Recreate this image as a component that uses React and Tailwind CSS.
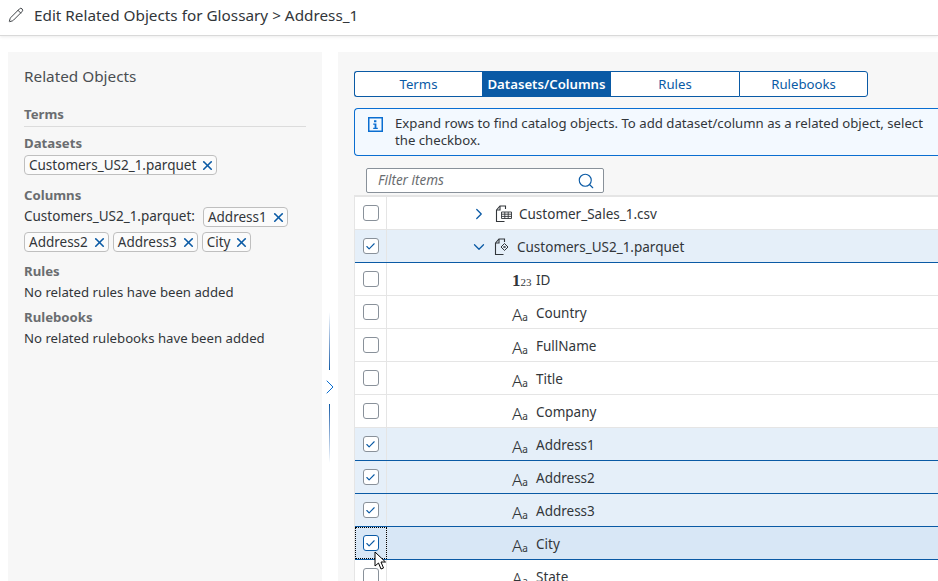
import React from "react";
import { Check, ChevronDown, ChevronRight, Pencil, Search, X } from "lucide-react";

const font = "font-['Noto_Sans','Open_Sans',sans-serif]";

const rows = [
  { name: "Customer_Sales_1.csv", kind: "table", icon: "file" },
  { name: "Customers_US2_1.parquet", kind: "open", icon: "file", checked: true },
  { name: "ID", icon: "num" },
  { name: "Country", icon: "text" },
  { name: "FullName", icon: "text" },
  { name: "Title", icon: "text" },
  { name: "Company", icon: "text" },
  { name: "Address1", icon: "text", checked: true },
  { name: "Address2", icon: "text", checked: true },
  { name: "Address3", icon: "text", checked: true },
  { name: "City", icon: "text", checked: true, focus: true },
  { name: "State", icon: "text" },
];

function Token({ label }) {
  return (
    <span className="inline-flex h-5 items-center rounded-[4px] border border-[#bfbfbf] bg-[#fbfbfb] pl-1 text-[13.5px] text-[#32363a]">
      {label}
      <X size={15} strokeWidth={2.6} className="ml-[4px] mr-[1px] text-[#0a5aa5]" />
    </span>
  );
}

function FileIcon({ kind }) {
  return (
    <svg width="18" height="18" viewBox="0 0 18 18" fill="none" stroke="#32363a" strokeWidth="1.1">
      <path d="M1.5 5 L5 1 H10.5 V4 M1.5 5 V16.5 H9.5" />
      <path d="M5 1 V5 H1.5" />
      {kind === "table" ? (
        <path d="M6.5 7 H16.5 V13.5 H6.5 Z M6.5 9.2 H16.5 M6.5 11.4 H16.5 M9.8 7 V13.5 M13.2 7 V13.5" strokeWidth="0.9" />
      ) : (
        <path d="M10.5 5.5 L14 9 L10.5 12.5 L7 9 Z M10.5 8 L11.5 9 L10.5 10 L9.5 9 Z" strokeWidth="1" />
      )}
    </svg>
  );
}

function InfoBox() {
  return (
    <svg width="15" height="15" viewBox="0 0 15 15" fill="none" className="mt-[2px] shrink-0">
      <rect x="0.75" y="0.75" width="13.5" height="13.5" stroke="#0a6ed1" strokeWidth="1.5" />
      <path d="M6 3.2 H8.4 V5.2 H6 Z M5.2 6.6 H8.4 V10.8 H9.8 V12 H5.2 V10.8 H6.6 V7.8 H5.2 Z" fill="#0a6ed1" />
    </svg>
  );
}

function Row({ row }) {
  const selected = row.checked;
  return (
    <div
      className={`relative flex h-[33px] shrink-0 border-b ${
        selected ? "border-[#0a5aa5]" : "border-[#e5e5e5]"
      } ${row.focus ? "bg-[#d8e7f6]" : selected ? "bg-[#e5eff9]" : "bg-white"}`}
    >
      <div
        className={`flex w-[32px] shrink-0 items-center justify-center border-r border-[#e5e5e5] ${
          row.focus ? "outline outline-1 outline-dotted outline-black -outline-offset-1" : ""
        }`}
      >
        <span
          className={`flex h-4 w-4 items-center justify-center rounded-[3px] border bg-white ${
            row.focus ? "border-[#0a5aa5]" : "border-[#89919a]"
          }`}
        >
          {selected && <Check size={11} strokeWidth={2.4} className="text-[#0a5aa5]" />}
        </span>
      </div>
      {row.kind ? (
        <div className="flex items-center pt-[2px] text-[13.5px] text-[#32363a]">
          {row.kind === "table" ? (
            <>
              <ChevronRight size={18} strokeWidth={1.7} className="ml-[83px] text-[#0a5aa5]" />
              <span className="ml-[7px] flex"><FileIcon kind="table" /></span>
              <span className="ml-[6px]">{row.name}</span>
            </>
          ) : (
            <>
              <ChevronDown size={18} strokeWidth={1.7} className="ml-[83px] text-[#0a5aa5]" />
              <span className="ml-[6px] flex"><FileIcon kind="open" /></span>
              <span className="ml-[5px]">{row.name}</span>
            </>
          )}
        </div>
      ) : (
        <div className="flex items-center pl-[125px] pt-[2px] text-[13.5px] text-[#32363a]">
          {row.icon === "num" ? (
            <span className="w-[24px] font-['Liberation_Serif',serif] text-[17px] font-bold leading-none">
              1<span className="text-[11px] font-normal">23</span>
            </span>
          ) : (
            <span className="mt-[3px] w-[24px] leading-none">
              <span className="text-[17px] font-light">A</span>
              <span className="text-[10px]">a</span>
            </span>
          )}
          <span>{row.name}</span>
        </div>
      )}
      {row.focus && (
        <svg className="absolute left-[19px] top-[24px] z-10" width="13" height="20" viewBox="0 0 13 20">
          <path d="M1 1 V15 L4.5 12 L7 18 L9.5 17 L7 11 H11.5 Z" fill="#fff" stroke="#000" strokeWidth="1" />
        </svg>
      )}
    </div>
  );
}

export default function App() {
  return (
    <div className={`flex h-screen w-full flex-col overflow-hidden bg-white ${font}`}>
      <header className="flex h-[36px] shrink-0 items-center border-b border-[#d9d9d9] pb-[5px] shadow-[0_1px_3px_rgba(0,0,0,0.08)]">
        <Pencil size={16} strokeWidth={1.4} className="ml-[8px] text-[#32363a]" />
        <span className="ml-[10px] text-[15.3px] text-[#32363a]">Edit Related Objects for Glossary &gt; Address_1</span>
      </header>

      <div className="flex min-h-0 flex-1 pl-[8px] pt-[16px]">
        {/* panel izquierdo */}
        <aside className="w-[314px] shrink-0 bg-[#f7f7f7] px-4 pt-[13px] text-[13.2px] text-[#32363a]">
          <h2 className="text-[15.3px] font-normal leading-[22px] text-[#4a4e52]">Related Objects</h2>
          <div className="mt-[17px] border-b border-[#dcdcdc] pb-[2px] font-bold leading-[20px] text-[#6a6d70]">Terms</div>
          <div className="mt-[6px] font-bold leading-[20px] text-[#6a6d70]">Datasets</div>
          <div className="mt-[2px] flex"><Token label="Customers_US2_1.parquet" /></div>
          <div className="mt-[10px] font-bold leading-[20px] text-[#6a6d70]">Columns</div>
          <div className="mt-[1px] flex flex-wrap items-center gap-x-1 gap-y-[4px]">
            <span className="mb-[2px] mr-[4px] text-[13.5px] leading-[20px]">Customers_US2_1.parquet:</span>
            <Token label="Address1" />
            <Token label="Address2" />
            <Token label="Address3" />
            <Token label="City" />
          </div>
          <div className="mt-[9px] font-bold leading-[20px] text-[#6a6d70]">Rules</div>
          <div className="mt-[1px] leading-[20px]">No related rules have been added</div>
          <div className="mt-[5px] font-bold leading-[20px] text-[#6a6d70]">Rulebooks</div>
          <div className="mt-[1px] leading-[20px]">No related rulebooks have been added</div>
        </aside>

        {/* separador */}
        <div className="flex w-[16px] shrink-0 flex-col items-center pt-[260px]">
          <div className="h-[58px] w-px -translate-x-px bg-gradient-to-b from-white to-[#0a5aa5]" />
          <ChevronRight size={24} strokeWidth={1} className="my-[5px] text-[#0a6ed1]" />
          <div className="h-[59px] w-px -translate-x-px bg-gradient-to-b from-[#0a5aa5] to-white" />
        </div>

        {/* panel derecho */}
        <main className="flex min-w-0 flex-1 flex-col overflow-hidden bg-[#f7f7f7] pl-[16px] pt-[19px]">
          <div className="flex h-[26px] w-[514px] shrink-0 text-[13.2px] text-[#0a5aa5]">
            <div className="flex w-[128px] items-center justify-center rounded-l-[3px] border border-r-0 border-[#0a5aa5] bg-white pt-[1px]">Terms</div>
            <div className="flex w-[129px] items-center justify-center bg-[#0a5aa5] pt-[1px] font-semibold text-white">Datasets/Columns</div>
            <div className="flex w-[128px] items-center justify-center border-y border-[#0a5aa5] bg-white pt-[1px]">Rules</div>
            <div className="flex w-[129px] items-center justify-center rounded-r-[3px] border border-[#0a5aa5] bg-white pt-[1px]">Rulebooks</div>
          </div>

          <div className="mt-[11px] flex h-[48px] w-[620px] shrink-0 rounded-l-[4px] border border-r-0 border-[#0a6ed1] bg-[#f3f9ff] pl-[13px] pt-[6px] text-[13.2px] leading-[16.5px] text-[#32363a]">
            <InfoBox />
            <p className="ml-[12px] w-[540px]">
              Expand rows to find catalog objects. To add dataset/column as a related object, select the checkbox.
            </p>
          </div>

          <div className="ml-[12px] mt-[12px] flex h-[25px] w-[238px] shrink-0 items-center justify-between rounded-[2px] border border-[#89919a] bg-white pl-[11px] pr-[8px] text-[13.5px] italic text-[#6a6d70]">
            Filter items
            <Search size={18} strokeWidth={1.5} className="text-[#0a5aa5]" />
          </div>

          <div className="mt-[2px] flex min-h-0 flex-1 flex-col overflow-hidden border-l border-t-2 border-[#e5e5e5] pt-0">
            {rows.map((row) => (
              <Row key={row.name} row={row} />
            ))}
          </div>
        </main>
      </div>
    </div>
  );
}
